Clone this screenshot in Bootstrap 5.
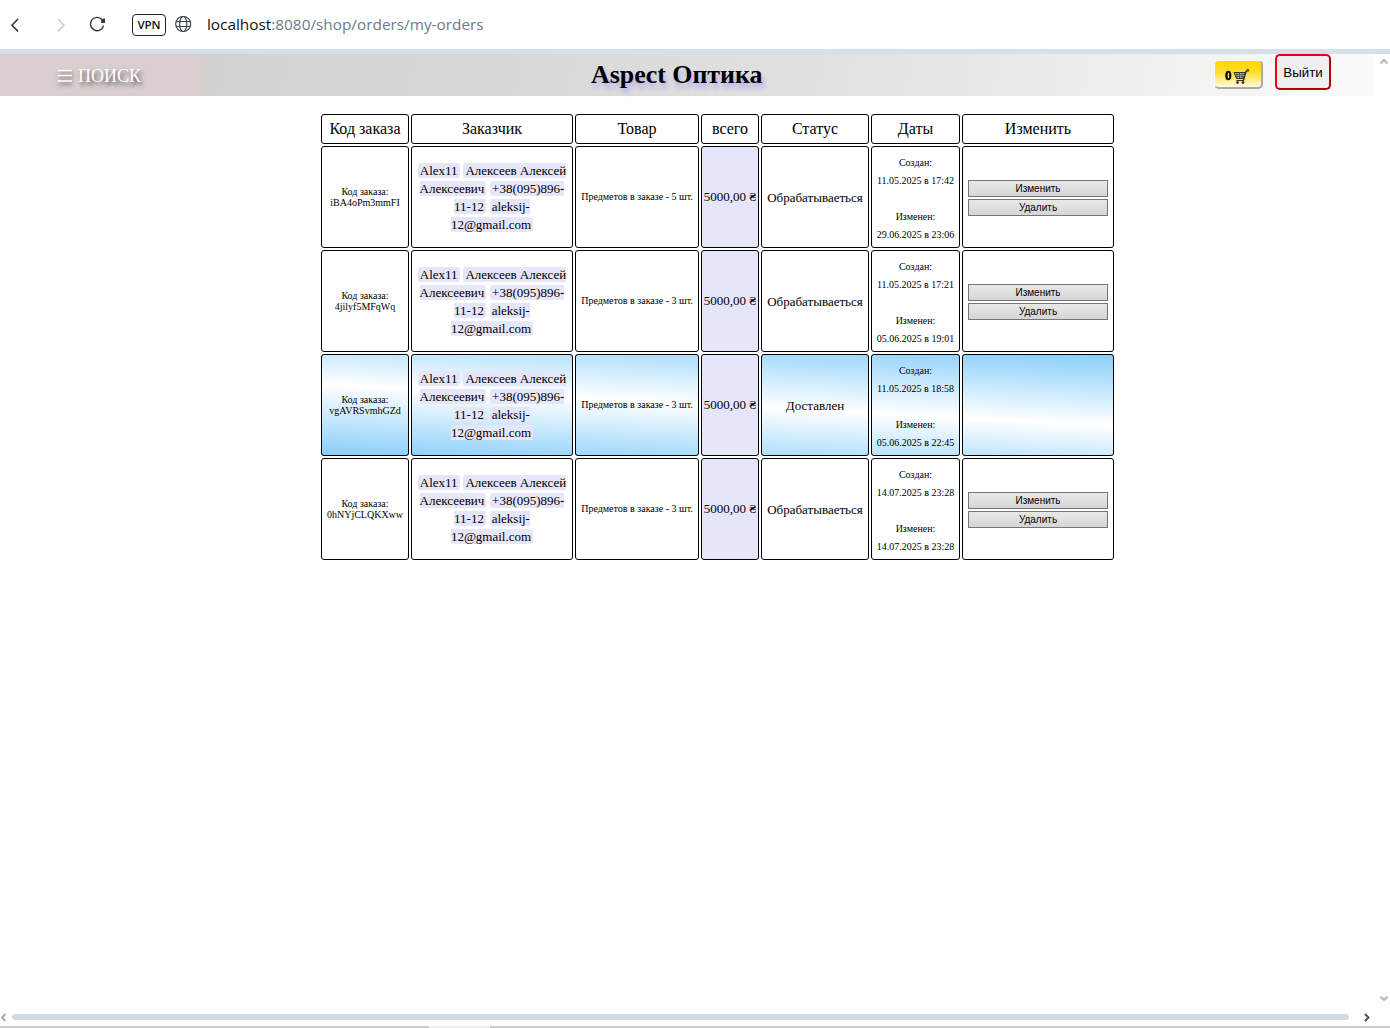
<!DOCTYPE html>
<html lang="ru">
<head>
<meta charset="utf-8">
<title>Aspect Оптика</title>
<link href="https://cdn.jsdelivr.net/npm/bootstrap@5.3.0/dist/css/bootstrap.min.css" rel="stylesheet">
<style>
html,body{height:100%;overflow:hidden}
body{background:#fff;color:#000;font-family:"Liberation Serif",serif;font-size:16px;line-height:18px}
.app{height:1028px;width:1390px}
.addr{height:49px;background:#fff;font-family:"Open Sans",sans-serif}
.addr svg{flex:none}
.globe{margin-left:9px}
.vpn{width:34px;height:22px;border:1.5px solid #222;border-radius:4px;font-size:11.5px;font-weight:600;color:#111;margin-left:26px}
.url{font-size:15.35px;color:#6b7c8a;white-space:pre;margin-left:15px;line-height:20px;padding-bottom:1px}
.url b{font-weight:400;color:#111}
.strip{height:5px;background:#d5e1ea}
.top-bar{height:42px;width:1375px;background:linear-gradient(100deg,#d0d0d0 10%,#d6d6d6 30%,#e0e0e0 58%,#fbfbfb 100%)}
.search-box{width:204px;height:42px;background:#dacfcf;color:#fff;font-size:18px;text-shadow:2px 3px 4px #444;padding:2px 0 0 57px}
.lines{filter:drop-shadow(1px 3px 2px #555)}
.brand{font-size:25.9px;font-weight:700;text-shadow:2px 5px 5px #b3abea;white-space:nowrap;margin-left:387px;width:171px;line-height:42px}
.cart{width:49px;height:29px;border:solid;border-width:1px 2px 2px 1px;border-color:#f8f8f8 #aaa #aaa #f8f8f8;border-radius:5px;background:linear-gradient(#ffd500,#ffe033 45%,#fffbe0);font:700 12.5px "Liberation Sans",sans-serif;margin:6px 0 0 452px;padding:4px 0 0 10px}
.digit{display:inline-block;transform:scaleX(.9);-webkit-text-stroke:.7px #000;color:#000}
.exit{width:56px;height:36px;border:2px solid;border-color:#f00009 #b4000a #b4000a #f00009;border-radius:5px;background:#efefef;font:13.33px "Liberation Sans",sans-serif;margin-left:12px;color:#000}
.orders{table-layout:fixed;width:797px;border-collapse:separate;border-spacing:2px;margin:16px 0 0 319px;text-align:center}
.orders th,.orders td{border:1px solid #000;border-radius:3px;padding:0;white-space:nowrap;vertical-align:middle}
.orders th{height:30px;font-weight:400;font-size:16px}
.orders td{height:102px}
.code,.goods{font-size:10px;line-height:11px}
.orders .goods{padding-bottom:2px}
.who{font-size:13px;line-height:18px}
.who span{background:#e6e6fa;border-radius:3px;padding:0 2px}
.who span+span{margin-left:.5px}
.orders .who{padding-top:1px}
.sum{font-size:13px;background:#e6e6fa}
.state{font-size:13px}
.orders .state{padding-top:2px}
.dates{font-size:10px;line-height:18px}
.orders .dates{padding-top:3px}
.orders .edit{padding-top:2px}
.done{background:linear-gradient(183deg,#87cefa,#fff,#87cefa)}
.act{display:block;width:140px;height:17px;margin:0 auto;border:1px solid #767676;background:linear-gradient(#e8e8e8,#d6d6d6);font:10px/14px "Liberation Sans",sans-serif;color:#000;padding:0}
.act+.act{margin-top:2px}
.vbar{width:15px;height:948px;padding:4px 0 0 4px}
.hbar{height:12px}
.thumb{height:6px;width:1337px;border-radius:3px;background:#d1dbe3;margin:0 14px 0 6px}
.foot{height:2px;background:#ccc;margin-top:3px}
.foot i{display:block;width:61px;height:2px;background:#f0f0f0;margin-left:429px}
</style>
<script src="https://cdn.jsdelivr.net/npm/bootstrap@5.3.0/dist/js/bootstrap.bundle.min.js"></script>
</head>
<body>
<div class="app d-flex flex-column">
  <div class="addr d-flex align-items-center">
    <svg width="106" height="49" fill="none" stroke-width="1.6"><path d="M18 19l-6 6.2 6 6.2" stroke="#2c363d"/><path d="M58 19l6 6.2-6 6.2" stroke="#c9cdd0"/><path d="M102.600 20.200a6.700 6.700 0 1 0 1 5.500" stroke="#2c363d" stroke-width="1.400"/><path d="M101.500 19l3.500-.5v4.500h-4z" fill="#2c363d"/></svg>
    <span class="vpn d-flex align-items-center justify-content-center">VPN</span>
    <svg class="globe" width="17" height="17" viewBox="0 0 17 17" fill="none" stroke="#3b4650" stroke-width="1.200"><circle cx="8.200" cy="8" r="7.500"/><ellipse cx="8.200" cy="8" rx="3.600" ry="7.500"/><path d="M1.200 5.500h14M1.200 10.500h14"/></svg>
    <span class="url"><b>localhost</b>:8080/shop/orders/my-orders</span>
  </div>
  <div class="strip"></div>
  <div class="d-flex">
    <div>
      <header class="top-bar d-flex align-items-start">
        <div class="search-box d-flex align-items-center"><svg class="lines" width="21" height="18"><path d="M1 3.500h14M1 8.500h14M1 14h14" stroke="#fff" stroke-width="1.600"/></svg><span>ПОИСК</span></div>
        <div class="brand">Aspect Оптика</div>
        <button class="cart d-flex align-items-center"><span class="digit">0</span><svg width="18" height="17" viewBox="0 0 18 17" fill="none" stroke="#333"><path d="M2 4.500h11L11.500 10.500H4.500z" fill="#c8c4a8" stroke-width="1"/><path d="M5 4.500v6M7.500 4.500v6M10 4.500v6M3 6.500h9.500M4 8.500h8" stroke-width=".7"/><path d="M11.500 12.500l2.500-9L16 2" stroke-width="1.400"/><path d="M4.500 12.500h7.500" stroke-width="1.200"/><circle cx="5.500" cy="14.500" r="1" fill="#333"/><circle cx="11" cy="14.500" r="1" fill="#333"/><circle cx="15.800" cy="2.300" r="1.100" fill="#843" stroke="#843"/></svg></button>
        <button class="exit p-0">Выйти</button>
      </header>
      <table class="orders">
        <colgroup><col style="width:88px"><col style="width:162px"><col style="width:124px"><col style="width:58px"><col style="width:108px"><col style="width:89px"><col style="width:152px"></colgroup>
        <thead><tr><th>Код заказа</th><th>Заказчик</th><th>Товар</th><th>всего</th><th>Статус</th><th>Даты</th><th>Изменить</th></tr></thead>
        <tbody>
        <tr><td class="code">Код заказа:<br>iBA4oPm3mmFI</td><td class="who"><span>Alex11</span> <span>Алексеев Алексей<br>Алексеевич</span> <span>+38(095)896-<br>11-12</span> <span>aleksij-<br>12@gmail.com</span></td><td class="goods">Предметов в заказе - 5 шт.</td><td class="sum">5000,00 ₴</td><td class="state">Обрабатываеться</td><td class="dates">Создан:<br>11.05.2025 в 17:42<br><br>Изменен:<br>29.06.2025 в 23:06</td><td class="edit"><button class="act">Изменить</button><button class="act">Удалить</button></td></tr>
        <tr><td class="code">Код заказа:<br>4jilyf5MFqWq</td><td class="who"><span>Alex11</span> <span>Алексеев Алексей<br>Алексеевич</span> <span>+38(095)896-<br>11-12</span> <span>aleksij-<br>12@gmail.com</span></td><td class="goods">Предметов в заказе - 3 шт.</td><td class="sum">5000,00 ₴</td><td class="state">Обрабатываеться</td><td class="dates">Создан:<br>11.05.2025 в 17:21<br><br>Изменен:<br>05.06.2025 в 19:01</td><td class="edit"><button class="act">Изменить</button><button class="act">Удалить</button></td></tr>
        <tr class="done"><td class="code">Код заказа:<br>vgAVRSvmhGZd</td><td class="who"><span>Alex11</span> <span>Алексеев Алексей<br>Алексеевич</span> <span>+38(095)896-<br>11-12</span> <span>aleksij-<br>12@gmail.com</span></td><td class="goods">Предметов в заказе - 3 шт.</td><td class="sum">5000,00 ₴</td><td class="state">Доставлен</td><td class="dates">Создан:<br>11.05.2025 в 18:58<br><br>Изменен:<br>05.06.2025 в 22:45</td><td></td></tr>
        <tr><td class="code">Код заказа:<br>0hNYjCLQKXww</td><td class="who"><span>Alex11</span> <span>Алексеев Алексей<br>Алексеевич</span> <span>+38(095)896-<br>11-12</span> <span>aleksij-<br>12@gmail.com</span></td><td class="goods">Предметов в заказе - 3 шт.</td><td class="sum">5000,00 ₴</td><td class="state">Обрабатываеться</td><td class="dates">Создан:<br>14.07.2025 в 23:28<br><br>Изменен:<br>14.07.2025 в 23:28</td><td class="edit"><button class="act">Изменить</button><button class="act">Удалить</button></td></tr>
        </tbody>
      </table>
    </div>
    <div class="vbar d-flex flex-column justify-content-between"><svg width="10" height="7" fill="none" stroke="#b5b5b5" stroke-width="2"><path d="M1.500 5.500L5 2l3.500 3.500"/></svg><svg width="10" height="7" fill="none" stroke="#b5b5b5" stroke-width="2"><path d="M1.500 1.500L5 5l3.500-3.500"/></svg></div>
  </div>
  <div class="mt-auto">
    <div class="hbar d-flex align-items-center"><svg width="6" height="9" fill="none" stroke="#aaa" stroke-width="2"><path d="M5.500 1L2 4.500 5.500 8"/></svg><div class="thumb"></div><svg width="8" height="9" fill="none" stroke="#555" stroke-width="2"><path d="M2 1l3.500 3.500L2 8"/></svg></div>
    <div class="foot"><i></i></div>
  </div>
</div>
</body>
</html>
